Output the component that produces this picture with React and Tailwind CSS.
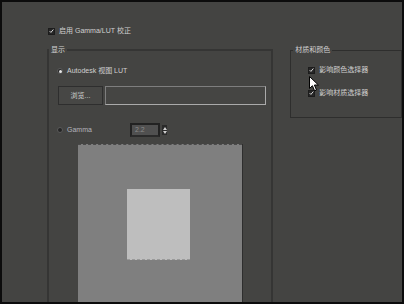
import React from "react";

const font = "font-['Liberation_Sans','Noto_Sans_CJK_SC',sans-serif]";
const latin = "font-['Liberation_Sans_Narrow','Liberation_Sans',sans-serif] text-[7px]";

function Check({ className = "" }) {
  return (
    <span className={`w-[7px] h-[7px] bg-[#262626] border border-[#1c1c1c] flex items-center justify-center shrink-0 ${className}`}>
      <svg width="6" height="6" viewBox="0 0 6 6">
        <path d="M0.8 3.2 L2.3 4.7 L5.2 1.2" stroke="#d8d8d8" strokeWidth="1.2" fill="none" />
      </svg>
    </span>
  );
}

function Radio({ on }) {
  return (
    <span className="w-[6px] h-[6px] rounded-full bg-[#252525] border border-[#5a5a5a] flex items-center justify-center shrink-0">
      {on && <span className="w-[3px] h-[3px] rounded-full bg-[#e8e8e8]" />}
    </span>
  );
}

export default function App() {
  return (
    <div className={`w-[404px] h-[304px] bg-[#0c0c0c] p-[2px] ${font}`}>
      <div className="w-full h-full bg-[#444442] overflow-hidden relative text-[#d0d0d0] text-[7px] leading-[10px]">
        <div className="flex items-center gap-[4px] pl-[46px] pt-[24px]">
          <Check />
          <span>启用 <span className={latin}>Gamma/LUT</span> 校正</span>
        </div>

        <div className="flex items-start gap-[17px] pl-[45px] mt-[9px]">
          <fieldset className="w-[227px] h-[300px] border-2 border-[#353534] m-0 p-0">
            <legend className="px-[2px] ml-0 leading-[10px]">显示</legend>
            <div className="flex flex-col pl-[8px]">
              <div className="flex items-center gap-[4px] mt-[11px]">
                <Radio on />
                <span><span className={latin}>Autodesk</span> 视图 <span className={latin}>LUT</span></span>
              </div>
              <div className="flex items-center gap-[2px] mt-[10px] pl-[1px]">
                <div className="w-[45px] h-[19px] bg-[#474745] border border-[#2e2e2e] flex items-center justify-center">
                  浏览...
                </div>
                <div className="w-[161px] h-[19px] bg-[#454543] border border-[#7e7e7e] border-b-[#aaaaaa] border-r-[#aaaaaa]" />
              </div>
              <div className="flex items-center mt-[18px]">
                <Radio />
                <span className={`ml-[4px] w-[63px] text-[#b4b4bc] ${latin}`}>Gamma</span>
                <div className={`w-[30px] h-[14px] bg-[#505050] border-2 border-[#222] border-b-[#2a2a2a] flex items-center pl-[3px] text-[#8a8a8a] ${latin}`}>
                  2.2
                </div>
                <div className="ml-[2px] w-[5px] h-[10px] bg-[#2a2a2a] flex flex-col items-center justify-center gap-[1px]">
                  <svg width="4" height="3" viewBox="0 0 4 3"><path d="M0 3 L2 0 L4 3 Z" fill="#d0d0d0" /></svg>
                  <svg width="4" height="3" viewBox="0 0 4 3"><path d="M0 0 L2 3 L4 0 Z" fill="#d0d0d0" /></svg>
                </div>
              </div>
              <div className="ml-[21px] mt-[7px] w-[165px] h-[170px] bg-[#7f7f7f] border-r border-r-[#2e2e2e] flex flex-col">
                <div className="h-0 border-t border-dashed border-[#4a4a4a]" />
                <div className="ml-[49px] mt-[44px] w-[63px] h-[71px] bg-[#bebebe] flex flex-col justify-end">
                  <div className="h-0 border-b border-dashed border-[#9a9a9a]" />
                </div>
              </div>
            </div>
          </fieldset>

          <fieldset className="w-[112px] h-[73px] border border-[#2e2e2d] m-0 p-0">
            <legend className="px-[2px] ml-[2px] leading-[10px]">材质和颜色</legend>
            <div className="flex flex-col pl-[17px] gap-[13px] mt-[10px]">
              <div className="flex items-center gap-[4px]">
                <Check />
                <span>影响颜色选择器</span>
              </div>
              <div className="flex items-center gap-[4px]">
                <Check />
                <span>影响材质选择器</span>
              </div>
            </div>
          </fieldset>
        </div>

        <svg className="absolute left-[307px] top-[74px]" width="10" height="16" viewBox="0 0 10 16">
          <path d="M0.5 0.5 L0.5 12.5 L3.4 9.7 L5.6 14.8 L7.5 14 L5.4 9 L9.4 9 Z" fill="#ffffff" stroke="#000000" strokeWidth="1" />
        </svg>
      </div>
    </div>
  );
}
